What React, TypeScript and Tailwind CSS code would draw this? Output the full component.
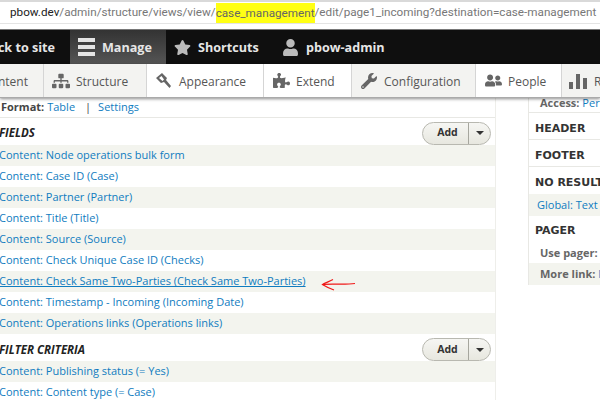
import { FaPuzzlePiece, FaSitemap, FaStar, FaUser, FaUserFriends, FaWrench } from "react-icons/fa";

const fields = [
  "Content: Node operations bulk form",
  "Content: Case ID (Case)",
  "Content: Partner (Partner)",
  "Content: Title (Title)",
  "Content: Source (Source)",
  "Content: Check Unique Case ID (Checks)",
  "Content: Check Same Two-Parties (Check Same Two-Parties)",
  "Content: Timestamp - Incoming (Incoming Date)",
  "Content: Operations links (Operations links)",
];

function AddButton() {
  return (
    <div className="flex w-[69px] h-[23px] rounded-full border border-[#b8b8b0] bg-gradient-to-b from-[#f6f6f3] to-[#e7e7df] text-[10.5px] font-bold text-[#333]">
      <div className="w-[45px] flex items-center justify-center pl-1">Add</div>
      <div className="flex-1 flex items-center justify-center border-l border-[#a6a69e]">
        <div className="w-0 h-0 border-x-[4px] border-x-transparent border-t-[4px] border-t-[#333]" />
      </div>
    </div>
  );
}

function SectionTitle({ title }: { title: string }) {
  return <div className="text-[11.5px] font-bold italic text-[#222] uppercase -ml-px">{title}</div>;
}

function Row({ text, odd, hover }: { text: string; odd: boolean; hover?: boolean }) {
  return (
    <div className={`h-[21px] flex items-center text-[11px] text-[#0f7cc0] ${odd ? "bg-[#f3f4ee]" : "bg-white"} ${hover ? "underline" : ""}`}>
      <span className="whitespace-nowrap -ml-px">{text}</span>
    </div>
  );
}

function TrayTab({ label, icon, grey, width }: { label: string; icon: React.ReactNode; grey?: boolean; width: string }) {
  return (
    <div className={`${width} shrink-0 flex items-center gap-[6px] pl-[8px] border-r border-[#d5d5d5] text-[#565656] ${grey ? "bg-[#f3f3f1]" : "bg-white"}`}>
      <div className="w-[18px] flex justify-center shrink-0">{icon}</div>
      <span className="pt-[3px]">{label}</span>
    </div>
  );
}

export default function App() {
  return (
    <div className="w-[600px] h-[400px] overflow-hidden bg-white font-['Open_Sans',sans-serif]">
      {/* Address bar */}
      <div className="h-[29px] border-t-2 border-[#d9d9d9] flex flex-col bg-white">
        <div className="h-[22px] flex items-center border-b border-[#e4e4e4] pl-[10px] font-['Roboto',sans-serif] text-[11.7px] text-[#777] whitespace-nowrap overflow-hidden">
          <span className="text-[#222]">pbow.dev</span>
          <span>/admin/structure/views/view/</span>
          <span className="bg-[#ffff14] h-[20px] leading-[20px] text-[#666]">case_management</span>
          <span>/edit/page1_incoming?destination=case-management</span>
        </div>
      </div>

      {/* Toolbar */}
      <div className="h-[35px] bg-[#0f0f0f] border-t border-[#777] flex items-stretch text-[12.6px] font-bold text-[#e6e6e6]">
        <div className="w-[70px] shrink-0 flex justify-end items-center pr-[15px] overflow-hidden whitespace-nowrap">
          <span className="pt-[3px]">Back to site</span>
        </div>
        <div className="w-[96px] shrink-0 flex items-center gap-[7px] pl-[8px] bg-gradient-to-b from-[#333] to-[#555]">
          <div className="flex flex-col gap-[3px]">
            <div className="w-[17px] h-[4px] bg-[#e4e4e4]" />
            <div className="w-[17px] h-[4px] bg-[#e4e4e4]" />
            <div className="w-[17px] h-[4px] bg-[#e4e4e4]" />
          </div>
          <span className="pt-[3px]">Manage</span>
        </div>
        <div className="w-[116px] shrink-0 flex items-center gap-[7px] pl-[8px]">
          <FaStar className="text-[#bbb] text-[17px] shrink-0" />
          <span className="pt-[3px]">Shortcuts</span>
        </div>
        <div className="flex items-center gap-[7px]">
          <FaUser className="text-[#bbb] text-[17px] shrink-0" />
          <span className="pt-[3px]">pbow-admin</span>
        </div>
      </div>

      {/* Tray */}
      <div className="relative z-10 h-[34px] flex items-stretch text-[12px] border-b border-[#aaa] shadow-[0_1px_3px_rgba(0,0,0,0.45)] overflow-hidden whitespace-nowrap">
        <div className="w-[44px] shrink-0 flex justify-end items-center pr-[15px] overflow-hidden bg-[#f3f3f1] border-r border-[#d5d5d5] text-[#565656]">
          <span className="pt-[3px]">Content</span>
        </div>
        <TrayTab width="w-[103px]" grey label="Structure" icon={<FaSitemap className="text-[#666] text-[18px]" />} />
        <TrayTab
          width="w-[117px]"
          label="Appearance"
          icon={
            <svg width="18" height="18" viewBox="0 0 18 18" fill="#666">
              <path d="M1 6 L7 1 L12 6 L11 8 L16 14 L14.5 16 L9 10 L6 11 Z M4 6 L7.5 9 L9 7.5 L6.5 4 Z" fillRule="evenodd" />
            </svg>
          }
        />
        <TrayTab width="w-[88px]" label="Extend" icon={<FaPuzzlePiece className="text-[#666] text-[17px]" />} />
        <TrayTab width="w-[124px]" grey label="Configuration" icon={<FaWrench className="text-[#666] text-[16px]" />} />
        <TrayTab width="w-[86px]" label="People" icon={<FaUserFriends className="text-[#666] text-[17px]" />} />
        <div className="flex-1 flex items-center gap-[7px] pl-[7px] bg-[#f3f3f1] text-[#565656]">
          <svg width="18" height="16" viewBox="0 0 18 16" className="shrink-0" fill="#666">
            <path d="M0 9h4v7H0zM7 1h4v15H7zM14 5h4v11h-4z" />
          </svg>
          <span className="pt-[3px]">Reports</span>
        </div>
      </div>

      {/* Main */}
      <div className="flex items-start">
        <div className="w-[496px] shrink-0 border-r border-[#eeeeea]">
          <div className="h-[20px] flex items-center border-b border-[#e8e8e4] text-[11px] pl-px">
            <span className="font-bold text-[#444]">Format:</span>
            <span className="text-[#0f7cc0] ml-[3px]">Table</span>
            <span className="text-[#444] ml-[10px]">|</span>
            <span className="text-[#0f7cc0] ml-[7px]">Settings</span>
          </div>
          <div className="h-[27px] flex items-center justify-between pr-[4px] pt-[3px]">
            <SectionTitle title="Fields" />
            <AddButton />
          </div>
          {fields.map((f, i) => (
            <Row key={f} text={f} odd={i % 2 === 0} hover={i === 6} />
          ))}
          <div className="h-[27px] flex items-center justify-between pr-[4px] pt-[4px]">
            <SectionTitle title="Filter criteria" />
            <AddButton />
          </div>
          <Row text="Content: Publishing status (= Yes)" odd />
          <Row text="Content: Content type (= Case)" odd={false} />
        </div>

        <div className="ml-[32px] flex-1 min-w-0 border-l border-[#e8e8e4] whitespace-nowrap overflow-hidden text-[11px]">
          <div className="h-[15px] border-b border-[#e8e8e4] pl-[11px] leading-[9px]">
            <span className="font-bold text-[#666]">Access:</span> <span className="text-[#0f7cc0]">Permission</span>
          </div>
          <div className="h-[27px] flex items-center pl-[6px] pt-[6px] border-b border-[#e8e8e4] font-['DejaVu_Sans',sans-serif] font-bold text-[#333]">HEADER</div>
          <div className="h-[27px] flex items-center pl-[6px] pt-[6px] border-b border-[#e8e8e4] font-['DejaVu_Sans',sans-serif] font-bold text-[#333]">FOOTER</div>
          <div className="h-[27px] flex items-center pl-[6px] pt-[6px] font-['DejaVu_Sans',sans-serif] font-bold text-[#333]">NO RESULTS BEHAVIOR</div>
          <div className="h-[22px] flex items-center pl-[8px] bg-[#f3f4ee] text-[#0f7cc0]">Global: Text area</div>
          <div className="h-[26px] flex items-center pl-[6px] pt-[5px] font-['DejaVu_Sans',sans-serif] font-bold text-[#333]">PAGER</div>
          <div className="h-[21px] flex items-center pl-[11px] pt-[1px]">
            <span className="font-bold text-[#666]">Use pager:</span>
          </div>
          <div className="h-[22px] flex items-center pl-[11px] bg-[#f3f4ee]">
            <span className="font-bold text-[#666]">More link:</span>&nbsp;<span className="text-[#0f7cc0]">No</span>
          </div>
        </div>
      </div>

      {/* Hand-drawn arrow */}
      <svg width="36" height="14" viewBox="0 0 36 14" className="absolute left-[321px] top-[278px] z-20" fill="none" stroke="#f01818" strokeWidth="1.2">
        <path d="M1.5 6.5 C 10 5.5, 24 7, 34 5.5" />
        <path d="M12 1.5 C 8 3.5, 4 5, 1.5 6.5 C 4 8, 7 10, 13 12" />
      </svg>
    </div>
  );
}
